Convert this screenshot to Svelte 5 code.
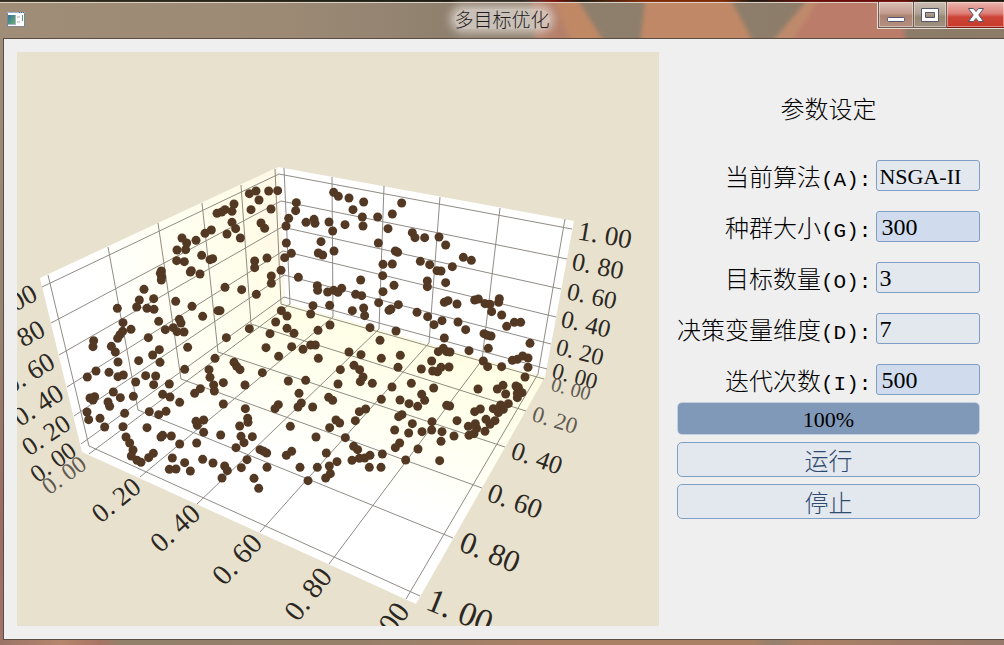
<script>
  const fields = [
    { id: 'algorithm', name: '当前算法', key: '(A):', value: 'NSGA-II', kind: 'combo' },
    { id: 'population', name: '种群大小', key: '(G):', value: '300', kind: 'spin' },
    { id: 'objectives', name: '目标数量', key: '(O):', value: '3', kind: '' },
    { id: 'dimension', name: '决策变量维度', key: '(D):', value: '7', kind: '' },
    { id: 'iterations', name: '迭代次数', key: '(I):', value: '500', kind: 'spin' }
  ];
  const progress = 100;

  // Projected grid lines of the two walls and the floor: x1 y1 x2 y2
  const grid = [
    [279, 174, 572, 229], [281, 201, 567, 259], [282, 227, 561, 289],
    [283, 251, 556, 317], [284, 275, 551, 344], [284, 297, 547, 369],
    [279, 174, 42, 287], [281, 201, 51, 323], [282, 227, 59, 355],
    [283, 251, 67, 387], [284, 275, 74, 416], [284, 297, 81, 444],
    [48, 275, 89, 446], [108, 247, 138, 410], [158, 223, 181, 379],
    [202, 203, 218, 352], [241, 185, 251, 324], [275, 169, 281, 304],
    [284, 168, 290, 304], [332, 177, 333, 317], [384, 186, 379, 329],
    [440, 197, 429, 343], [500, 208, 482, 360], [565, 219, 538, 374],
    [89, 446, 420, 596], [138, 410, 453, 538], [181, 379, 482, 488],
    [218, 352, 505, 447], [251, 324, 526, 411], [281, 304, 544, 379],
    [290, 304, 89, 454], [333, 317, 140, 477], [379, 329, 197, 504],
    [429, 343, 260, 532], [482, 360, 329, 564], [538, 374, 406, 599]
  ];

  // Axis labels: text, centre x, centre y, angle, size
  const ticks = [
    ['1. 00', 605, 235, 10, 27], ['0. 80', 598, 266, 11, 26], ['0. 60', 592, 296, 12, 25],
    ['0. 40', 586, 324, 13, 25], ['0. 20', 580, 352, 14, 24], ['0. 00', 575, 376, 15, 23],
    ['0. 00', 571, 389, 15, 20, 'far'], ['0. 20', 555, 420, 17, 23, 'far'], ['0. 40', 537, 458, 19, 26],
    ['0. 60', 515, 501, 20, 28], ['0. 80', 490, 552, 22, 31], ['1. 00', 460, 611, 22, 34],
    ['1. 00', 11, 304, -28, 27], ['0. 80', 19, 340, -29, 27], ['0. 60', 29, 373, -31, 27],
    ['0. 40', 38, 405, -33, 27], ['0. 20', 46, 435, -34, 26], ['0. 00', 53, 462, -36, 25],
    ['0. 00', 64, 475, -36, 24, 'far'], ['0. 20', 116, 500, -39, 27], ['0. 40', 175, 528, -42, 28],
    ['0. 60', 237, 559, -47, 29], ['0. 80', 308, 594, -52, 29], ['1. 00', 385, 630, -54, 30]
  ];

  // Solutions, grouped by tile; offsets are in thirds of a unit from the tile origin
  const tiles = [
    { x: 10, y: 160, d: '621,160 585,220 604,210 516,234 530,249 558,241 501,270 527,269 500,302 523,305 575,286 600,299 608,296 454,333 451,340 455,350 454,360 544,332 541,336 570,342 402,388 388,420 431,416 380,441 411,445 432,448 322,445 497,424 546,439 578,469 624,452 446,484 339,488 363,508 338,514 466,509 490,503 508,478 513,489 501,515 522,516' },
    { x: 220, y: 160, d: '88,101 108,93 146,93 173,92 117,120 93,149 153,147 42,132 15,149 36,154 5,156 36,187 47,206 21,222 61,234 123,189 134,205 104,303 104,323 141,294 154,348 154,370 183,331 15,382 65,389 109,403 0,452 184,452 201,468 167,486 88,506 201,505 150,521 222,520 229,128 227,152 206,175 198,198 199,249 214,280 194,293 258,187 282,178 285,190 327,186 338,213 303,245 342,273 295,279 308,285 341,97 355,109 387,114 431,126 399,149 427,171 429,198 375,194 473,171 545,129 517,162 504,206 475,249 577,218 585,233 614,233 657,231 526,273 533,277 489,313 517,312 601,304 629,314 651,332 488,347 522,376 489,395 422,360 622,363 622,380 235,352 292,377 293,391 323,396 341,391 354,397 365,385 407,403 425,407 279,437 272,462 329,436 397,452 431,444 434,467 476,428 535,434 513,447 507,451 591,457 623,470 642,494 330,495 294,511 450,503 528,513' },
    { x: 430, y: 160, d: '47,255 100,292 124,301 67,320 33,333 47,368 43,427 54,422 81,432 134,420 145,417 165,431 180,433 208,416 206,427 185,455 215,465 230,499 253,487 272,487 36,482 84,486 107,509 162,521 183,528 172,526 43,534' },
    { x: 10, y: 330, d: '251,32 249,50 304,49 316,66 323,25 330,14 415,23 533,52 448,59 428,75 450,97 386,92 324,96 258,123 232,141 297,127 324,140 340,135 377,156 407,137 437,138 431,164 478,162 524,118 615,85 597,119 600,142 611,165 613,183 571,176 554,190 509,217 458,193 480,201 370,199 331,203 310,186 294,216 299,229 240,204 254,200 249,210 231,246 236,269 270,265 284,291 344,250 339,290 411,293 418,245 446,254 468,244 558,274 562,286 581,270 581,307 560,339 509,342 453,321 458,316 484,318 348,321 359,339 369,360 364,378 381,391 393,397 416,383 430,370 487,384 478,418 498,417 524,398 541,423 578,388 609,399' },
    { x: 220, y: 330, d: '19,23 10,158 10,222 2,315 14,408 22,422 6,444 138,53 215,50 176,79 249,58 272,45 286,45 295,85 42,97 50,109 60,119 75,165 127,128 205,153 257,151 237,190 244,219 234,231 278,231 175,224 165,236 76,236 83,265 84,277 59,288 63,319 97,320 72,338 48,353 211,289 288,321 120,359 140,369 131,364 81,389 64,413 141,412 102,445 116,475 199,376 215,364 240,412 292,412 264,452 319,369 351,395 328,408 331,431 317,444 376,323 329,293 348,270 359,279 406,272 326,202 338,211 354,162 361,119 387,66 423,74 402,106 419,119 429,141 421,155 457,160 484,208 418,245 437,237 480,31 484,85 541,76 534,112 516,171 574,160 540,210 567,221 593,229 605,193 614,211 641,174 604,117 635,93 638,123 652,125 536,260 546,254 577,281 524,300 566,309 606,305 636,275 635,300 539,339 526,353 594,357 487,372 557,390 448,412 483,412 396,391 418,385 434,384 450,376 401,349 413,359' },
    { x: 430, y: 330, d: '40,55 25,65 50,65 60,66 117,62 175,55 300,40 160,93 173,110 215,110 247,91 262,88 278,78 294,84 294,112 285,141 57,111 33,112 22,125 144,177 202,177 219,166 227,192 258,168 265,172 265,180 276,188 262,190 262,203 235,221 212,225 190,236 205,236 220,238 205,248 50,226 59,228 134,245 151,237 81,272 168,268 195,272 180,283 115,289 136,281 140,295 165,304 117,316 132,311 36,305 33,334 72,318 29,392' }
  ];
  const points = tiles.flatMap((t) =>
    t.d.split(' ').map((p) => {
      const [px, py] = p.split(',').map(Number);
      return { x: t.x + px / 3, y: t.y + py / 3 };
    })
  );
</script>

<div class="window">
  <header>
    <svg class="glass" viewBox="0 0 1004 39" preserveAspectRatio="none" aria-hidden="true">
      <defs>
        <linearGradient id="bar" x1="0" x2="1" y1="0" y2="0">
          <stop offset="0" stop-color="#9f8d78" />
          <stop offset="0.28" stop-color="#9c8a75" />
          <stop offset="0.45" stop-color="#8f806e" />
          <stop offset="1" stop-color="#8b7b67" />
        </linearGradient>
        <linearGradient id="edge" x1="0" x2="1" y1="0" y2="0">
          <stop offset="0" stop-color="#302b1c" />
          <stop offset="0.52" stop-color="#1c1a10" />
          <stop offset="0.55" stop-color="#7c1008" />
          <stop offset="0.58" stop-color="#1c1a10" />
          <stop offset="0.64" stop-color="#7e2a06" />
          <stop offset="0.72" stop-color="#7e2a06" />
          <stop offset="0.75" stop-color="#1c1a10" />
          <stop offset="0.81" stop-color="#6a0c08" />
          <stop offset="0.9" stop-color="#6a0c08" />
          <stop offset="0.92" stop-color="#1c1a10" />
        </linearGradient>
        <filter id="soft" x="-10%" y="-40%" width="120%" height="180%">
          <feGaussianBlur stdDeviation="2" />
        </filter>
      </defs>
      <rect width="1004" height="39" fill="url(#bar)" />
      <g filter="url(#soft)">
        <path d="M530 -6 H574 L606 46 H536 Z" fill="#b5806b" />
        <path d="M552 -6 H574 L606 46 H572 Z" fill="#c08865" />
        <path d="M646 -6 H728 L755 46 H640 Z" fill="#c08866" />
        <path d="M812 -6 H900 L906 46 H770 Z" fill="#bb7b6a" />
        <path d="M812 -6 H822 L790 46 H770 Z" fill="#bf8a6c" />
      </g>
      <rect width="1004" height="2" fill="url(#edge)" />
      <rect y="2" width="1004" height="1" fill="#ddd6cc" />
    </svg>
    <svg class="app-icon" width="18" height="16" viewBox="0 0 18 16" aria-hidden="true">
      <defs>
        <linearGradient id="pic" x1="0" x2="1" y1="0" y2="1">
          <stop offset="0" stop-color="#37729c" />
          <stop offset="1" stop-color="#62b06e" />
        </linearGradient>
      </defs>
      <rect x="0" y="0" width="18" height="15" fill="#7e8791" />
      <rect x="1" y="1" width="16" height="13" fill="#fdfdfe" />
      <rect x="0" y="0" width="18" height="1" fill="#9fb4cc" />
      <path d="M12 0h1v1h-1zM14 0h1v1h-1zM16 0h1v1h-1z" fill="#3c668f" />
      <rect x="1" y="3" width="8" height="10" fill="#aab0c2" />
      <rect x="1" y="3" width="7" height="9" fill="url(#pic)" />
      <path d="M10 4h3v2h-3zM10 9h3v2h-3z" fill="#d4d2cc" />
      <rect x="15" y="3" width="1" height="6" fill="#4c9c7c" />
    </svg>
    <h1>多目标优化</h1>
    <div class="controls">
      <button class="min" aria-label="最小化">
        <svg width="18" height="18" viewBox="0 0 18 18"><rect x="0.500" y="11.500" width="17" height="4" rx="1" fill="#fff" stroke="#53566b" /></svg>
      </button>
      <button class="max" aria-label="最大化">
        <svg width="18" height="18" viewBox="0 0 18 18"><path d="M0.500 2.500h17v13h-17zM4.500 6.500v5h9v-5z" fill="#fff" fill-rule="evenodd" stroke="#53566b" /></svg>
      </button>
      <button class="close" aria-label="关闭">
        <svg width="18" height="18" viewBox="0 0 18 18"><path d="M1.500 2.500h5L9 5.500l2.500-3h5L11.800 9l4.700 6.500h-5L9 12.500l-2.500 3h-5L6.200 9z" fill="#fff" stroke="#53566b" stroke-linejoin="round" /></svg>
      </button>
    </div>
  </header>

  <main>
    <svg class="plot" viewBox="17 52 642 574" role="img" aria-label="三维散点图">
      <defs>
        <linearGradient id="left" gradientUnits="userSpaceOnUse" x1="100" y1="310" x2="285" y2="250">
          <stop offset="0" stop-color="#ffffff" />
          <stop offset="0.55" stop-color="#fffff0" />
          <stop offset="0.85" stop-color="#fffde8" />
          <stop offset="1" stop-color="#fff9e8" />
        </linearGradient>
        <linearGradient id="floor" gradientUnits="userSpaceOnUse" x1="340" y1="310" x2="285" y2="460">
          <stop offset="0" stop-color="#fffee4" />
          <stop offset="0.5" stop-color="#fffff0" />
          <stop offset="1" stop-color="#ffffff" />
        </linearGradient>
      </defs>
      <rect x="17" y="52" width="642" height="574" fill="#e8e1ce" />
      <path d="M278 167 574 221 545 377 285 303Z" fill="#fff" />
      <path d="M40 278 278 167 285 303 82 452Z" fill="url(#left)" />
      <path d="M285 303 545 377 416 604 82 452Z" fill="url(#floor)" />
      <g class="grid">
        {#each grid as [x1, y1, x2, y2]}
          <line {x1} {y1} {x2} {y2} />
        {/each}
      </g>
      <g fill="#533923">
        {#each points as p}
          <circle cx={p.x} cy={p.y} r="4.500" />
        {/each}
      </g>
      <g class="ticks">
        {#each ticks as [text, x, y, angle, size, tone]}
          <text class={tone} font-size={size} y={size / 3} transform="translate({x} {y}) rotate({angle})">{text}</text>
        {/each}
      </g>
    </svg>

    <form onsubmit={(e) => e.preventDefault()}>
      <h2>参数设定</h2>
      <div class="fields">
        {#each fields as f}
          <label for={f.id}>{f.name}<span>{f.key}</span></label>
          <input id={f.id} type="text" class={f.kind} value={f.value} />
        {/each}
      </div>
      <div class="progress" role="progressbar" aria-label="进度" aria-valuenow={progress} aria-valuemin="0" aria-valuemax="100">
        <div class="fill" style="width: {progress}%"></div>
        <span>{progress}%</span>
      </div>
      <button class="action" type="submit">运行</button>
      <button class="action" type="button">停止</button>
    </form>
  </main>
</div>

<style>
  :global(body) {
    background: #9a7f69;
  }
  .window {
    box-sizing: border-box;
    min-height: 100vh;
    display: flex;
    flex-direction: column;
    padding: 0 0 5px 3px;
    font-family: "Liberation Serif", "Noto Sans CJK SC", sans-serif;
    font-weight: 300;
    background:
      linear-gradient(90deg, #9a7468 0, #b5866c 60px, #a87563 100px, #93806a 120px, #96806a 36%, #aa8065 55%, #aa8065 75%, #93806f 77%, #aa8065 80%, #96796a 100%) bottom / 100% 5px no-repeat,
      linear-gradient(180deg, #9f8d78 0, #96846f 50%, #9a6c60 80%, #a07468 100%);
  }
  header {
    position: relative;
    display: grid;
    grid-template-columns: 1fr auto 1fr;
    align-items: start;
    height: 38px;
    margin-left: -3px;
  }
  .glass {
    position: absolute;
    inset: 0;
    width: 100%;
    height: 100%;
  }
  .app-icon {
    position: relative;
    margin: 12px 0 0 7px;
  }
  h1 {
    position: relative;
    margin: 9px 0 0;
    border-radius: 10px;
    font: 300 19px/20px "Noto Sans CJK SC", sans-serif;
    color: #1d1d1f;
    background: rgba(226, 220, 213, 0.7);
    box-shadow: 0 0 8px 4px rgba(226, 220, 213, 0.7);
  }
  .controls {
    position: relative;
    justify-self: end;
    display: flex;
    margin-top: 2px;
    border: 1px solid #e6ddd4;
    border-width: 0 0 1px 1px;
  }
  .controls button {
    display: grid;
    place-items: center;
    height: 26px;
    padding: 0;
    border: 1px solid #6c5b50;
    border-width: 0 1px 1px 0;
    box-shadow: inset 0 0 0 1px rgba(255, 255, 255, 0.4);
  }
  .controls .min {
    width: 36px;
    border-left-width: 1px;
    background: linear-gradient(#d9bfb4, #c29c8e 45%, #ad8272 55%, #b58f7e);
  }
  .controls .max {
    width: 33px;
    background: linear-gradient(#c9beb2, #b0a394 45%, #96876f 60%, #a09080);
  }
  .controls .close {
    width: 57px;
    border-color: #7a1c16;
    border-right-width: 0;
    background: linear-gradient(#eab5ae, #dd8078 45%, #cc4438 60%, #c93a2a);
  }
  main {
    flex: 1;
    display: flex;
    align-items: flex-start;
    gap: 18px;
    padding: 13px 24px 13px 13px;
    border: 1px solid #5b4c42;
    border-right: 0;
    background: #efefef;
  }
  .plot {
    flex: 1;
    min-width: 0;
    display: block;
  }
  .grid {
    stroke: #6a655e;
    stroke-width: 1;
    opacity: 0.75;
  }
  .ticks {
    font-family: "Liberation Serif", serif;
    font-weight: 400;
    text-anchor: middle;
    fill: #2b2823;
  }
  .ticks .far {
    fill: #5f5a52;
  }
  form {
    width: 303px;
    display: flex;
    flex-direction: column;
  }
  h2 {
    margin: 38px 0 34px;
    font: 300 24px/36px "Noto Sans CJK SC", sans-serif;
    text-align: center;
    color: #000;
  }
  .fields {
    display: grid;
    grid-template-columns: 1fr 104px;
    row-gap: 20px;
    column-gap: 5px;
    margin-bottom: 7px;
  }
  label {
    font: 300 24px/31px "Noto Sans CJK SC", sans-serif;
    height: 31px;
    text-align: right;
    white-space: nowrap;
    color: #000;
  }
  label span {
    font: 400 21px/28px "Liberation Mono", monospace;
  }
  input {
    box-sizing: border-box;
    width: 100%;
    height: 31px;
    padding: 2px 2px 0;
    border: 1px solid #7f9ec4;
    border-radius: 3px;
    background: #e3e8ef;
    font: 400 24px/28px "Liberation Serif", serif;
    color: #000;
  }
  .spin {
    padding-left: 4px;
    background: #d0dcee;
  }
  .combo {
    font-size: 22px;
  }
  .progress {
    position: relative;
    box-sizing: border-box;
    height: 33px;
    margin-bottom: 7px;
    border: 1px solid #c3d0e4;
    border-radius: 5px;
    background: #e3e8ef;
    overflow: hidden;
  }
  .fill {
    height: 100%;
    background: #8099b8;
  }
  .progress span {
    position: absolute;
    inset: 0;
    font: 400 22px/34px "Liberation Serif", serif;
    text-align: center;
    color: #000;
  }
  .action {
    height: 35px;
    margin: 0 0 7px;
    padding: 0;
    border: 1px solid #7f9ec4;
    border-radius: 5px;
    background: #e3e8ef;
    font: 300 24px/32px "Noto Sans CJK SC", sans-serif;
    color: #2e4a70;
  }
</style>
